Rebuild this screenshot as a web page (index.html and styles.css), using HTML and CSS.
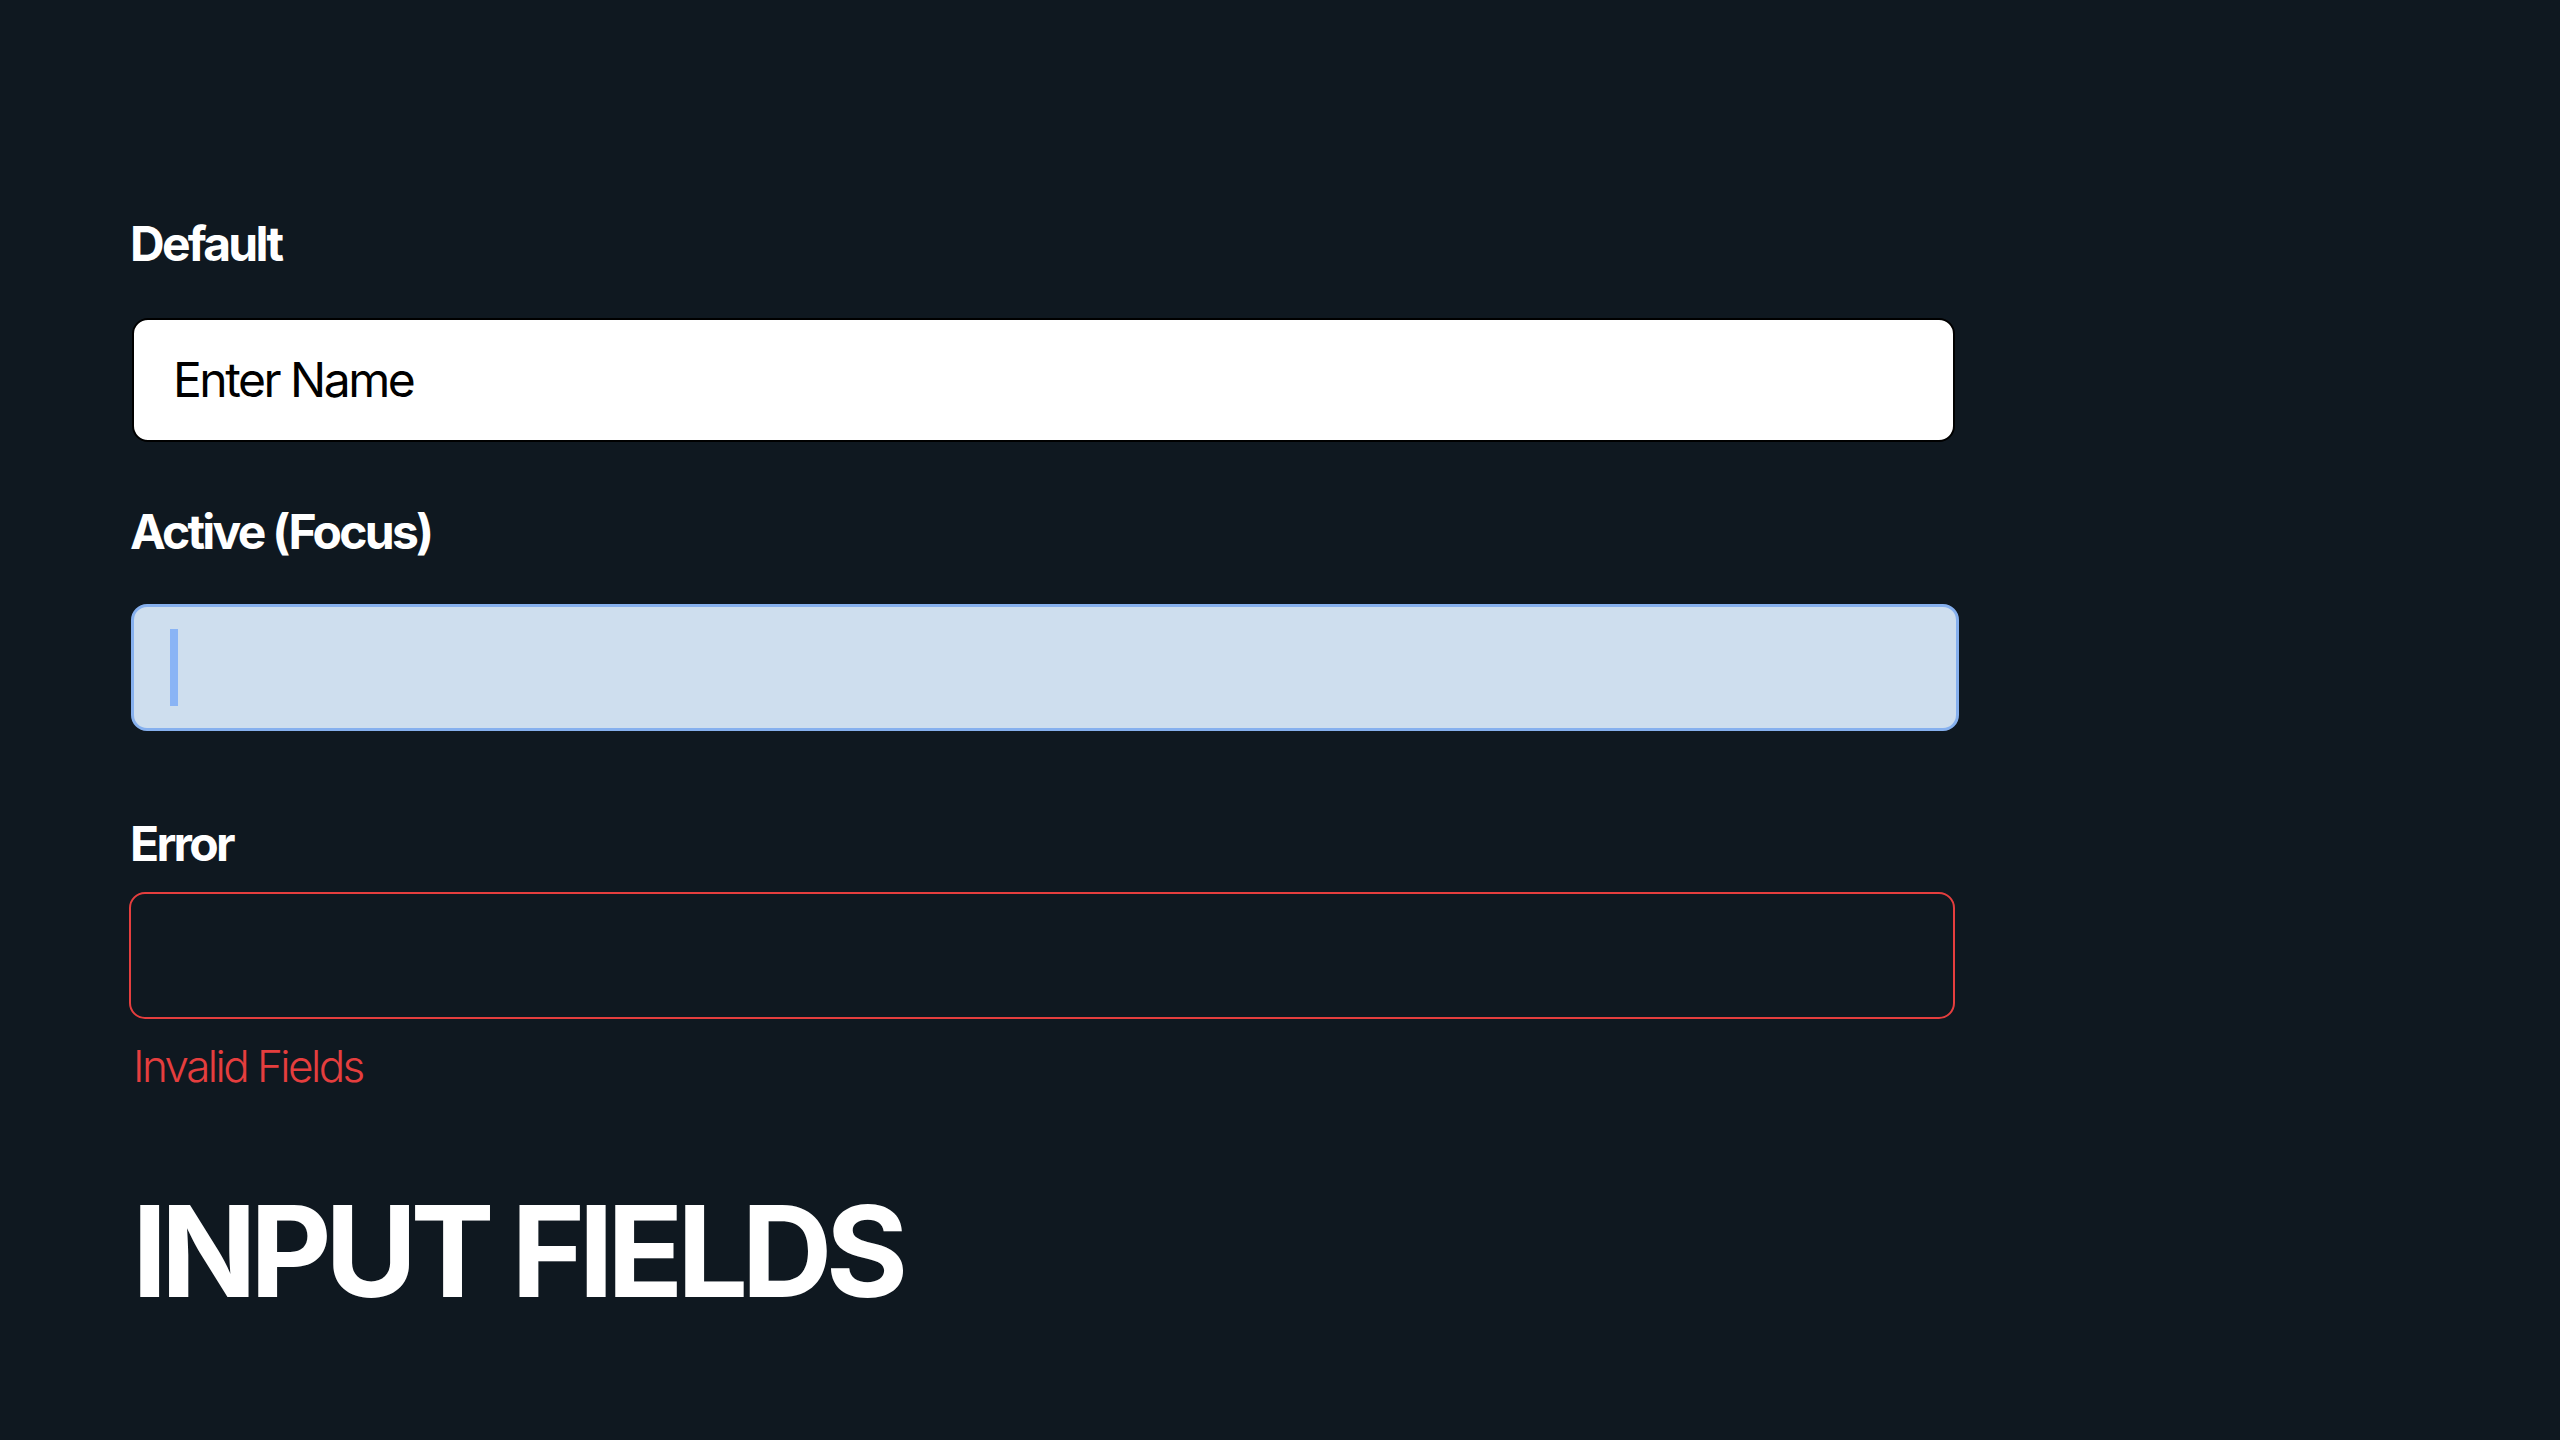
FILE: index.html
```html
<!DOCTYPE html>
<html lang="en">
<head>
<meta charset="utf-8">
<title>Input Fields</title>
<link rel="stylesheet" href="styles.css">
</head>
<body>
<main class="page">
  <section class="field field-default">
    <div class="label">Default</div>
    <div class="input input-default"><span class="value">Enter Name</span></div>
  </section>
  <section class="field field-active">
    <div class="label">Active (Focus)</div>
    <div class="input input-active"><span class="caret"></span></div>
  </section>
  <section class="field field-error">
    <div class="label">Error</div>
    <div class="input input-error"></div>
    <div class="error-text">Invalid Fields</div>
  </section>
  <h1 class="title">INPUT FIELDS</h1>
</main>
</body>
</html>
```
FILE: styles.css
```css
html, body {
  margin: 0;
  padding: 0;
  background: #0f1820;
}
body {
  font-family: Inter, "Noto Sans", sans-serif;
  width: 2560px;
  height: 1440px;
  overflow: hidden;
}
.page {
  display: flex;
  flex-direction: column;
  padding: 220px 0 0 130px;
}
.field {
  display: flex;
  flex-direction: column;
}
.label {
  color: #ffffff;
  font-size: 48px;
  font-weight: 700;
  line-height: 48px;
  letter-spacing: -0.057em;
}
.input {
  box-sizing: border-box;
  display: flex;
  align-items: center;
  border-radius: 16px;
}
.input-default {
  margin-top: 50px;
  margin-left: 2px;
  width: 1823px;
  height: 124px;
  background: #ffffff;
  border: 2px solid #000000;
  padding-left: 39px;
}
.value {
  color: #000000;
  font-size: 48px;
  font-weight: 400;
  line-height: 48px;
  letter-spacing: -0.052em;
}
.field-active {
  margin-top: 66px;
}
.input-active {
  margin-top: 48px;
  margin-left: 1px;
  width: 1828px;
  height: 127px;
  background: #cedeee;
  border: 3px solid #86b0ee;
  padding-left: 36px;
}
.caret {
  display: block;
  width: 8px;
  height: 77px;
  background: #8ab4f5;
}
.field-error {
  margin-top: 89px;
}
.input-error {
  margin-top: 24px;
  margin-left: -1px;
  width: 1826px;
  height: 127px;
  background: transparent;
  border: 2px solid #e53e3e;
}
.error-text {
  margin-top: 25px;
  margin-left: 3px;
  color: #e53e3e;
  font-size: 44px;
  font-weight: 300;
  line-height: 44px;
  letter-spacing: -0.058em;
}
.title {
  margin: 100px 0 0 2px;
  color: #ffffff;
  font-size: 126px;
  font-weight: 700;
  line-height: 126px;
  letter-spacing: -0.053em;
}
```
